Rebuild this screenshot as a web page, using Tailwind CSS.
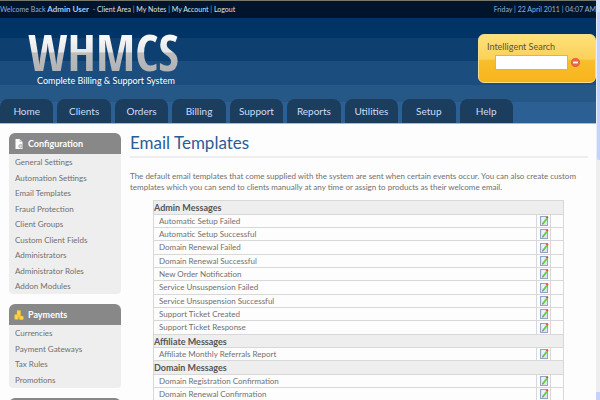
<!DOCTYPE html>
<html lang="en">
<head>
<meta charset="utf-8">
<title>WHMCS - Email Templates</title>
<script src="https://cdn.jsdelivr.net/npm/@tailwindcss/browser@4"></script>
</head>
<body class="bg-[#fdfdfd] font-['Lato','Open_Sans',sans-serif] text-[8px] leading-[11px] text-[#707070]">
<svg class="hidden" aria-hidden="true">
  <symbol id="edit" viewBox="0 0 9 10">
    <rect x="0.5" y="0.5" width="7" height="9" fill="#dbe5f3" stroke="#8fa5c8"/>
    <path d="M2 2h3M2 4h2" stroke="#fff"/>
    <path d="M3 7.5L6.8 2.8" stroke="#5fd03c" stroke-width="1.8"/>
    <path d="M2.2 8.5l.4-1.6 1.2 1z" fill="#476030"/>
    <path d="M6.5 2.2L7.8 .8" stroke="#e5553e" stroke-width="2"/>
  </symbol>
</svg>
<div class="relative h-screen overflow-hidden pr-1">
  <header class="bg-[linear-gradient(#003366_0_38px,#0d3f70_38px_61px,#1b4d7e_61px_85px,#255887_85px_102px,#2c6095_102px)]">
    <div class="flex h-[18px] items-center justify-between border-t border-[#77786d] bg-[#00152b] text-[7px] whitespace-nowrap text-[#8fb0de]">
      <p>Welcome Back <b class="text-[8px] text-[#a9c8f5]">Admin User</b>&nbsp; - <a href="#" class="text-[#dde3ea]">Client Area</a> | <a href="#" class="text-[#dde3ea]">My Notes</a> | <a href="#" class="text-[#dde3ea]">My Account</a> | <a href="#" class="text-[#dde3ea]">Logout</a></p>
      <p>Friday | 22 April 2011 | 04:07 AM</p>
    </div>
    <div class="flex h-[81px] items-start justify-between pt-4 pl-7">
      <a href="#" class="block whitespace-nowrap">
        <span class="-my-1 block bg-[linear-gradient(#f7f7f7_20%,#e6e6e6_50%,#bdbdbd_52%,#b4b4b4_90%)] bg-clip-text py-1 font-['Open_Sans_Condensed','Open_Sans',sans-serif] text-[50px] leading-9 font-bold text-transparent">WHMCS</span>
        <span class="block pt-1 pl-[9px] text-[9px] leading-[14px] text-white">Complete Billing &amp; Support System</span>
      </a>
      <form class="h-[49px] w-[118px] rounded-md border border-[#f3dc8a] bg-[linear-gradient(#fee07a,#fbd25a_50%,#f8bd2c_55%,#f9b41c)] pt-[5px] pl-2">
        <label for="search" class="block text-[9px] leading-[14px] text-[#5a5540]">Intelligent Search</label>
        <div class="flex items-center gap-[3px] pt-px pl-2">
          <input id="search" type="text" class="h-[15px] w-[73px] border border-[#c9b77a] bg-white px-1">
          <button type="submit" aria-label="Search">
            <svg class="size-[9px]" viewBox="0 0 9 9"><circle cx="4.5" cy="4.5" r="4.2" fill="#e9674f" stroke="#d94f36" stroke-width=".6"/><rect x="2" y="3.6" width="5" height="1.8" fill="#fff"/></svg>
          </button>
        </div>
      </form>
    </div>
    <nav class="flex w-full max-w-[513px] gap-1 text-center text-[10px] leading-6 text-[#cfdcf5] *:flex-1 *:basis-0 *:rounded-t-lg *:bg-[#1b3d5e]">
      <a href="#">Home</a><a href="#">Clients</a><a href="#">Orders</a><a href="#">Billing</a><a href="#">Support</a><a href="#">Reports</a><a href="#">Utilities</a><a href="#">Setup</a><a href="#">Help</a>
    </nav>
  </header>
  <div class="flex gap-[9px] border-t border-[#a9bccf] pt-[9px] pr-2 pl-[9px]">
    <aside class="w-[112px] shrink-0 space-y-[10px]">
      <section>
        <h2 class="flex h-[21px] items-center gap-1 rounded-t-md bg-[#888] pl-[5px] text-[9px] font-bold text-white">
          <svg class="size-2.5" viewBox="0 0 10 10"><path d="M1.5 0h4l3 3v7h-7z" fill="#fff"/><path d="M5.5 0v3h3z" fill="#ccc"/><circle cx="6.6" cy="7.2" r="1.8" fill="#ddd" stroke="#aaa" stroke-width=".9"/></svg>Configuration</h2>
        <ul class="rounded-b-sm bg-[#eee] pt-px pl-[6px] leading-[15px] *:even:leading-[16px]">
          <li><a href="#">General Settings</a></li><li><a href="#">Automation Settings</a></li><li><a href="#">Email Templates</a></li><li><a href="#">Fraud Protection</a></li><li><a href="#">Client Groups</a></li><li><a href="#">Custom Client Fields</a></li><li><a href="#">Administrators</a></li><li><a href="#">Administrator Roles</a></li><li><a href="#">Addon Modules</a></li>
        </ul>
      </section>
      <section>
        <h2 class="flex h-[21px] items-center gap-1 rounded-t-md bg-[#888] pl-[5px] text-[9px] font-bold text-white">
          <svg class="size-2.5" viewBox="0 0 10 10"><g fill="#ffd54a" stroke="#e9ae2c" stroke-width=".5"><rect x="3" y=".3" width="3.6" height="7" rx="1"/><rect x=".6" y="4.6" width="3.8" height="5" rx="1"/><rect x="5.2" y="6" width="4.2" height="3.7" rx="1"/></g></svg>Payments</h2>
        <ul class="rounded-b-sm bg-[#eee] pt-px pl-[6px] leading-[15px] *:even:leading-[16px]">
          <li><a href="#">Currencies</a></li><li><a href="#">Payment Gateways</a></li><li><a href="#">Tax Rules</a></li><li><a href="#">Promotions</a></li>
        </ul>
      </section>
      <div class="h-[21px] rounded-t-md bg-[#888]"></div>
    </aside>
    <main class="min-w-0 flex-1">
      <h1 class="border-b-2 border-[#eee] pb-[3px] text-[17px] leading-5 text-[#2b5c96]">Email Templates</h1>
      <p class="pt-[13px] pr-2 pb-[7px]">The default email templates that come supplied with the system are sent when certain events occur. You can also create custom templates which you can send to clients manually at any time or assign to products as their welcome email.</p>
      <table class="mr-6 ml-[23px] w-[411px] table-fixed border-collapse border border-[#d8d8d8] text-left *:*:h-[13px] *:*:nth-[3n+1]:h-[14px] [&_td]:border [&_td]:border-[#d8d8d8] [&_td]:p-0 [&_td:first-child]:pl-[5px] [&_td_svg]:ml-[3px] [&_td_svg]:block [&_th]:border [&_th]:border-[#d8d8d8] [&_th]:bg-[#eee] [&_th]:p-0 [&_th]:text-[9px] [&_th]:text-[#555]">
        <colgroup><col><col class="w-[14px]"><col class="w-[13px]"></colgroup>
        <tbody id="rows"></tbody>
      </table>
    </main>
  </div>
  <div class="absolute inset-y-0 right-0 flex w-1 flex-col bg-[#eee]" aria-hidden="true">
    <div class="h-3 bg-[#d5e0fb]"></div><div class="h-[148px] rounded-l-xs border-l border-[#e8eefd] bg-[#c3d3fb]"></div><div class="mt-auto h-2 bg-[#c3d3fb]"></div>
  </div>
</div>
<script>
const groups = [
  ['Admin Messages', ['Automatic Setup Failed', 'Automatic Setup Successful', 'Domain Renewal Failed', 'Domain Renewal Successful', 'New Order Notification', 'Service Unsuspension Failed', 'Service Unsuspension Successful', 'Support Ticket Created', 'Support Ticket Response']],
  ['Affiliate Messages', ['Affiliate Monthly Referrals Report']],
  ['Domain Messages', ['Domain Registration Confirmation', 'Domain Renewal Confirmation']],
];
document.getElementById('rows').innerHTML = groups.map(([title, items]) =>
  `<tr><th colspan="3" scope="colgroup">${title}</th></tr>` + items.map(name =>
    `<tr><td>${name}</td><td><a href="#" aria-label="Edit ${name}"><svg class="h-[10px] w-[9px]"><use href="#edit"/></svg></a></td><td></td></tr>`).join('')).join('');
</script>
</body>
</html>
